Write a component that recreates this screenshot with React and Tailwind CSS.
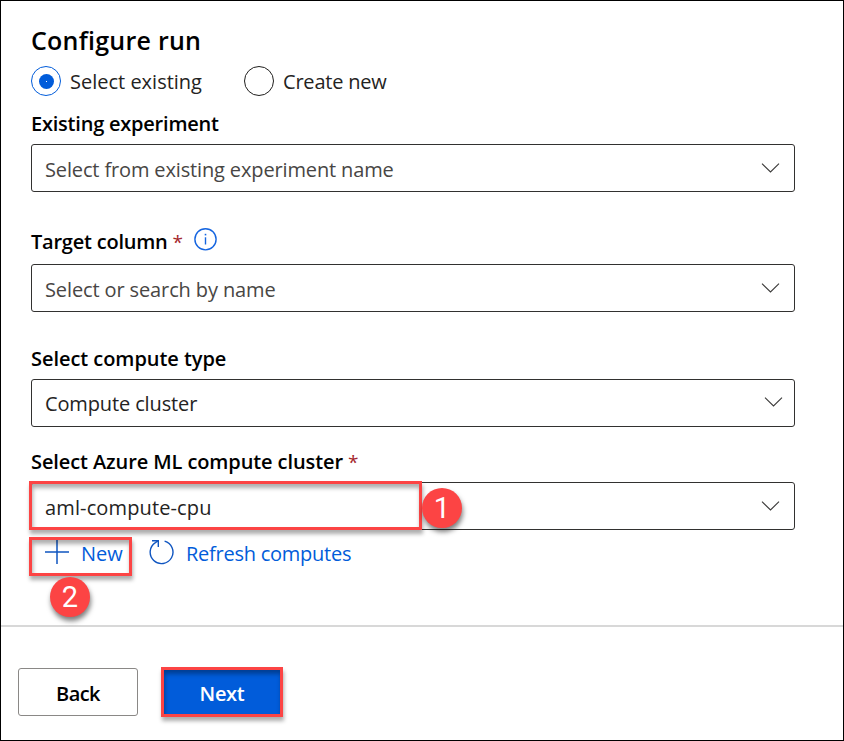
import React from 'react';

function Chevron({ className }) {
  return (
    <svg className={'h-[10px] w-[19px] shrink-0 ' + className} viewBox="0 0 19 10" fill="none" stroke="#3b3a39" strokeWidth="1.1">
      <path d="M1 0.7 L9.5 9 L18 0.7" />
    </svg>
  );
}

function Label({ children, required, className, tracking, info }) {
  return (
    <div className={'flex h-7 items-center whitespace-nowrap ' + className}>
      <span className={'text-[20px] font-semibold ' + tracking}>{children}</span>
      {required && <span className="ml-[5px] text-[19px] font-medium text-[#a4262c]">*</span>}
      {info && (
        <svg className="relative -top-[3px] ml-[11px] h-6 w-6" viewBox="0 0 24 24" fill="none" stroke="#1565e0" strokeWidth="1.4">
          <circle cx="11.5" cy="12.3" r="10.6" />
          <path d="M11.5 10.3 V17.5" />
          <path d="M11.5 6.8 V8.4" strokeWidth="1.6" />
        </svg>
      )}
    </div>
  );
}

function Select({ children, className, tracking, chevron = 'mr-[14px]', overlay }) {
  return (
    <div className={'relative flex h-12 w-[764px] items-center justify-between rounded-[3px] border border-[#323130] pl-[13px] ' + className}>
      <span className={'mt-[3px] whitespace-nowrap text-[20px] ' + tracking}>{children}</span>
      <Chevron className={chevron} />
      {overlay}
    </div>
  );
}

function Highlight({ className }) {
  return (
    <div className={'pointer-events-none absolute border-[3px] border-[#fc4444] shadow-[1px_4px_4px_rgba(0,0,0,0.32),inset_1px_4px_4px_rgba(0,0,0,0.32)] ' + className} />
  );
}

function Badge({ children, className }) {
  return (
    <div className={'absolute z-10 flex h-10 w-10 items-center justify-center rounded-full bg-[#fc4444] font-[Roboto,Arial,sans-serif] text-[29px] leading-none text-white shadow-[1px_4px_5px_rgba(0,0,0,0.5)] ' + className}>
      {children}
    </div>
  );
}

export default function App() {
  return (
    <div className="h-[741px] w-[844px] overflow-hidden border border-black bg-white font-[Open_Sans,Noto_Sans,sans-serif] text-black">
      <div className="pl-[30px] pt-[25px]">
        <h1 className="flex h-[30px] items-center whitespace-nowrap text-[25px] font-semibold tracking-[0.25px]">Configure run</h1>

        <div className="mt-[10px] flex h-[30px] items-center text-[20px] text-[#242322]">
          <span className="flex h-[30px] w-[30px] items-center justify-center rounded-full border border-[#015cda]">
            <span className="flex h-[15px] w-[15px] items-center justify-center rounded-full bg-[#015cda]">
              <span className="h-px w-px bg-white" />
            </span>
          </span>
          <span className="ml-[9px] mt-[2px] w-[174px] whitespace-nowrap">Select existing</span>
          <span className="h-[30px] w-[30px] rounded-full border border-[#201f1e]" />
          <span className="ml-[9px] mt-[2px] whitespace-nowrap tracking-[-0.2px]">Create new</span>
        </div>

        <Label className="mt-[14px]" tracking="tracking-[-0.22px]">Existing experiment</Label>
        <Select className="mt-[6px] text-[#484644]" tracking="tracking-[-0.14px]">Select from existing experiment name</Select>

        <Label className="mt-[36px]" tracking="tracking-[-0.22px]" required info>Target column</Label>
        <Select className="mt-[8px] text-[#484644]" tracking="tracking-[-0.12px]">Select or search by name</Select>

        <Label className="mt-[33px]" tracking="tracking-[-0.05px]">Select compute type</Label>
        <Select className="mt-[6px] text-[#242322]" tracking="relative -top-px tracking-[-0.13px]" chevron="mr-[11px] mb-[2px]">Compute cluster</Select>

        <Label className="mt-[21px]" tracking="tracking-[-0.1px]" required>Select Azure ML compute cluster</Label>
        <Select
          className="mt-[6px] text-[#242322]"
          tracking="tracking-[0.13px]"
          overlay={
            <>
              <Highlight className="-left-[3px] -top-[2px] h-[49px] w-[393px]" />
              <Badge className="left-[390px] top-[5px]">1</Badge>
            </>
          }
        >
          aml-compute-cpu
        </Select>

        <div className="relative mt-[8px] flex h-8 items-center text-[20px] text-[#015cda]">
          <svg className="mb-[4px] ml-[14px] h-6 w-6" viewBox="0 0 24 24" fill="none" stroke="#0f55c0" strokeWidth="1.5">
            <path d="M0 12 H24 M12 0 V24" />
          </svg>
          <span className="ml-[12px] w-[67px] whitespace-nowrap">New</span>
          <svg className="mb-[4px] h-[26px] w-[26px]" viewBox="0 0 26 26" fill="none" stroke="#0f55c0" strokeWidth="1.4">
            <path d="M16.6 2.2 A11.4 11.4 0 1 1 7.4 3.6 L10.2 1.7" />
            <path d="M4 1.7 H10.3 V8" />
          </svg>
          <span className="ml-[12px] whitespace-nowrap tracking-[-0.25px]">Refresh computes</span>
          <Highlight className="-left-[2px] -top-px h-[39px] w-[103px]" />
          <Badge className="left-[19px] top-[39px]">2</Badge>
        </div>
      </div>

      <div className="mt-[55px] h-[2px] bg-[#d8d8d8]" />

      <div className="mt-[41px] flex pl-[17px] text-[20px] font-semibold">
        <button className="h-12 w-[120px] rounded-[3px] border border-[#8a8886] bg-white">
          <span className="relative top-[2px] tracking-[-0.6px]">Back</span>
        </button>
        <div className="relative ml-[24px]">
          <button className="h-12 w-[120px] bg-[#015cda] text-white">
            <span className="relative top-[2px] tracking-[-0.3px]">Next</span>
          </button>
          <Highlight className="-left-px -top-px h-[50px] w-[122px]" />
        </div>
      </div>
    </div>
  );
}
